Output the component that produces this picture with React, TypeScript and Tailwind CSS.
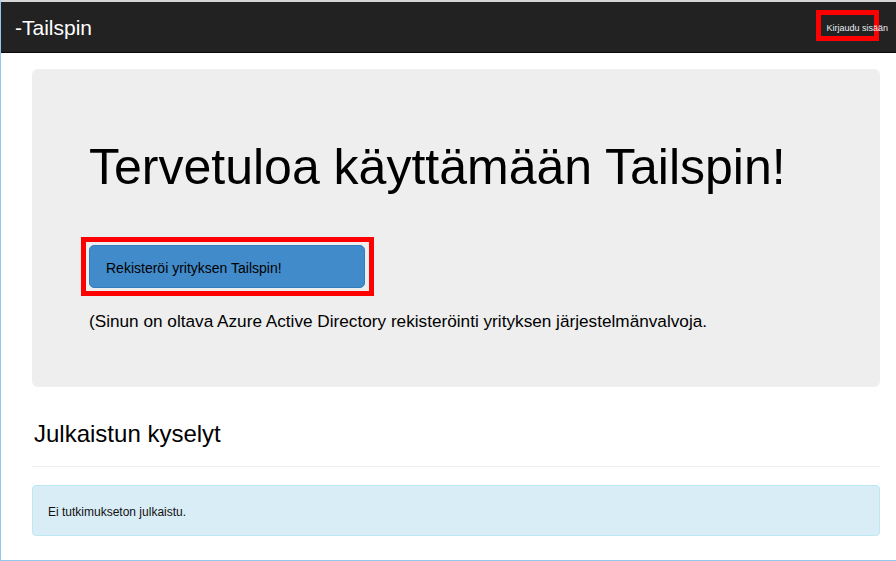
export default function App() {
  return (
    <div className="relative h-[561px] w-[896px] overflow-hidden border-t-2 border-b border-l border-t-[#d6d6d6] border-b-[#90c8f0] border-l-[#90c8f0] bg-white font-['Liberation_Sans',Arial,sans-serif] text-black">
      {/* Navbar */}
      <nav className="relative flex h-[51px] items-center border-b border-[#080808] bg-[#222222]">
        <div className="absolute left-[815px] top-[8px] h-[31px] w-[63px] border-[5px] border-[#ff0000]" />
        <span className="pl-[14px] text-[21px] leading-[21px] text-white">-Tailspin</span>
        <a className="relative z-10 ml-auto pr-[8px] pt-[1px] text-[9px] leading-[12px] text-[#e8eef5]">Kirjaudu sisään</a>
      </nav>

      <div className="w-[879px] pl-[31px]">
        {/* Jumbotron */}
        <div className="mt-[16px] rounded-[6px] bg-[#eeeeee] px-[57px] pt-[71px] pb-[54px]">
          <h1 className="text-[50px] leading-[55px]">Tervetuloa käyttämään Tailspin!</h1>
          <div className="-ml-[8px] mt-[42px] inline-block border-[5px] border-[#ff0000] py-[3px] pl-[3px] pr-[4px]">
            <button className="block h-[43px] w-[276px] rounded-[5px] border border-[#357ebd] bg-[#428bca] pl-[16px] pt-[2px] text-left text-[14px] leading-[20px] text-black">
              Rekisteröi yrityksen Tailspin!
            </button>
          </div>
          <p className="mt-[13px] text-[17.2px] leading-[24px]">
            (Sinun on oltava Azure Active Directory rekisteröinti yrityksen järjestelmänvalvoja.
          </p>
        </div>

        {/* Published surveys */}
        <h2 className="mt-[34px] border-b border-[#eeeeee] pb-[19px] pl-[2px] text-[24px] leading-[26px]">Julkaistun kyselyt</h2>
        <div className="mt-[18px] rounded-[4px] border border-[#bce8f1] bg-[#d9edf7] px-[15px] pt-[18px] pb-[14px] text-[12px] leading-[17px] text-[#111]">
          Ei tutkimukseton julkaistu.
        </div>
      </div>
    </div>
  )
}
